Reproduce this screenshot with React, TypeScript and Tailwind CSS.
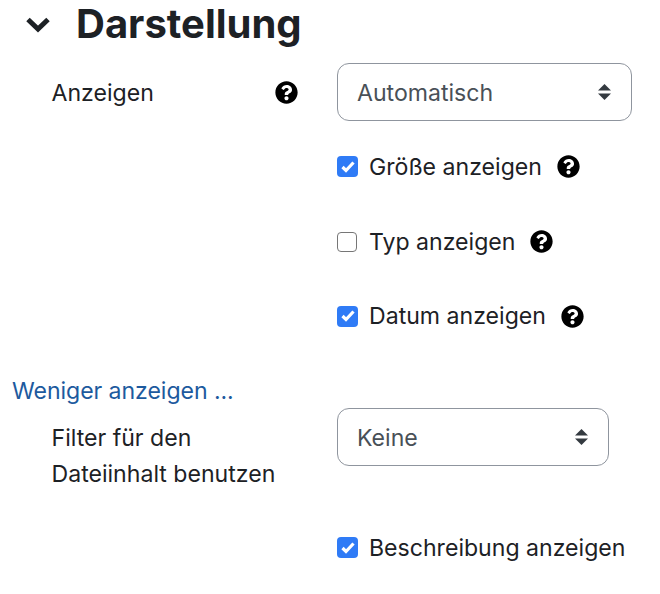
import { FaQuestionCircle } from 'react-icons/fa'

function Help() {
  return <FaQuestionCircle className="h-[23px] w-[23px] shrink-0 text-black" />
}

function Select({ label, width }: { label: string; width: string }) {
  return (
    <div className={`flex h-[58px] items-center justify-between rounded-[12px] border border-[#8f959e] bg-white pl-[19px] pr-[20px] text-[#495057] ${width}`}>
      <span className="pt-[1px]">{label}</span>
      <svg width="13" height="16" viewBox="0 0 13 16" fill="#343a40">
        <path d="M6.5 0 L13 6.5 H0 Z" />
        <path d="M6.5 16 L13 9.5 H0 Z" />
      </svg>
    </div>
  )
}

function Check({ label, checked, help }: { label: string; checked: boolean; help?: boolean }) {
  return (
    <div className="flex h-[37px] items-center">
      {checked ? (
        <span className="flex h-[21px] w-[21px] items-center justify-center rounded-[4px] bg-[#2f7bf6]">
          <svg width="14" height="12" viewBox="0 0 14 12" fill="none" stroke="white" strokeWidth="3.2">
            <path d="M1.5 6 L5 9.5 L12.5 1.5" />
          </svg>
        </span>
      ) : (
        <span className="h-[20px] w-[20px] rounded-[4px] border border-[#767676] bg-white" />
      )}
      <span className={checked ? 'ml-[11px]' : 'ml-[12px]'}>{label}</span>
      {help && <span className="ml-[15px]"><Help /></span>}
    </div>
  )
}

export default function App() {
  return (
    <div className="h-[594px] w-[660px] overflow-hidden bg-white font-['Inter',sans-serif] text-[23.1px] leading-[36px] text-[#1d2125]">
      <div className="flex h-[48px] items-center pl-[26px]">
        <svg width="24" height="24" viewBox="0 0 24 24" fill="none" stroke="#1d2125" strokeWidth="5">
          <path d="M2 7.5 L12 17 L22 7.5" />
        </svg>
        <h2 className="ml-[26px] text-[40px] font-bold leading-[48px]">Darstellung</h2>
      </div>

      <div className="mt-[15px] flex">
        <div className="flex h-[58px] w-[337px] items-center pl-[51.5px] pr-[39px]">
          <span className="flex-1 pt-[1px]">Anzeigen</span>
          <Help />
        </div>
        <Select label="Automatisch" width="w-[295px]" />
      </div>

      <div className="mt-[27px] flex flex-col pl-[337px]">
        <Check label="Größe anzeigen" checked help />
        <div className="mt-[38px]">
          <Check label="Typ anzeigen" checked={false} help />
        </div>
        <div className="mt-[37.5px]">
          <Check label="Datum anzeigen" checked help />
        </div>
      </div>

      <a className="mt-[38.5px] block pl-[12px] tracking-[-0.06px] text-[#1d5a9e]">Weniger anzeigen ...</a>

      <div className="mt-[-1px] flex">
        <div className="w-[337px] pl-[51.5px] pt-[12px]">
          Filter für den
          <br />
          Dateiinhalt benutzen
        </div>
        <Select label="Keine" width="w-[272px]" />
      </div>

      <div className="mt-[37px] pl-[337px]">
        <Check label="Beschreibung anzeigen" checked />
      </div>
    </div>
  )
}
